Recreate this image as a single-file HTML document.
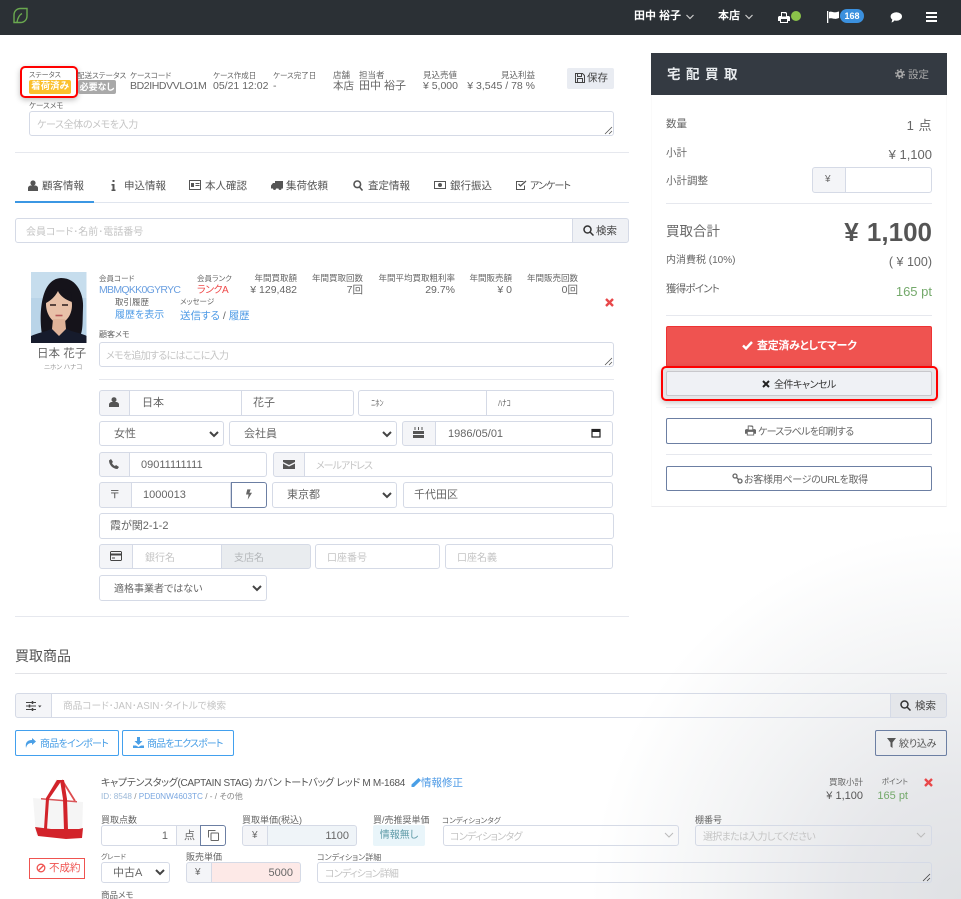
<!DOCTYPE html>
<html lang="ja"><head><meta charset="utf-8"><title>宅配買取</title>
<style>
html,body{margin:0;padding:0;background:#fff}
#p{position:relative;width:961px;height:899px;overflow:hidden;font-family:"Liberation Sans","Noto Sans CJK JP",sans-serif;font-feature-settings:"palt";color:#666;font-size:11px;line-height:14px;background:radial-gradient(circle 370px at 100% 100%,#dfe1e4 0,#e6e7ea 30%,#f3f4f5 65%,#fff 100%)}
#p div,#p svg{position:absolute;box-sizing:border-box}
.t{white-space:nowrap}
.l{font-size:8.5px;white-space:nowrap;color:#666}
.k{font-size:7.5px}
.v{font-size:10.5px;white-space:nowrap;color:#666}
.bl{color:#4f9be6}
.f{background:#fff;border:1px solid #d5dae6;border-radius:3px;height:26px;line-height:24px;padding-left:10px;white-space:nowrap;color:#666;font-size:11px;overflow:hidden}
.ph{color:#c4c4c4}
.pre{background:#f4f5f8;border:1px solid #d5dae6;border-radius:3px 0 0 3px;height:26px}
.hr{height:1px;background:#e6e8ee}
.ic{fill:#555}
.btn{border:1px solid #6c7fa3;border-radius:2px;background:#fff;color:#666;white-space:nowrap}
</style></head><body>
<div id="p">

<!-- top bar -->
<div style="left:0;top:0;width:961px;height:35px;background:#2b3035"></div>
<svg style="left:12px;top:7px" width="18" height="18" viewBox="0 0 18 18" fill="none" stroke="#6aa84f" stroke-width="1.4"><path d="M2 15.500V8C2 4 5 1.500 8.500 1.500H15V9c0 4-3 6.500-6.500 6.500zM5 15C6 10 8 7.500 10 6.500"/></svg>
<div class="t" style="left:634px;top:9px;color:#fff;font-weight:bold;font-size:11px">田中 裕子</div>
<svg style="left:686px;top:14px" width="8" height="6" viewBox="0 0 8 6" fill="none" stroke="#ccc" stroke-width="1.200"><path d="M.5 1l3.500 3.500L7.500 1"/></svg>
<div class="t" style="left:718px;top:9px;color:#fff;font-weight:bold;font-size:11px">本店</div>
<svg style="left:745px;top:14px" width="8" height="6" viewBox="0 0 8 6" fill="none" stroke="#ccc" stroke-width="1.200"><path d="M.5 1l3.500 3.500L7.500 1"/></svg>
<svg style="left:778px;top:11px" width="12" height="12" viewBox="0 0 12 12" fill="#fff"><path d="M3 1h5l1 1v3h2l1 1v4h-2v2H2v-2H0V6l1-1h2zM4 2v3.500h4V2.500zM3 8v3h6V8z" fill-rule="evenodd"/></svg>
<div style="left:791px;top:11px;width:10px;height:10px;border-radius:50%;background:#8bc34a"></div>
<svg style="left:827px;top:11px" width="12" height="12" viewBox="0 0 12 12" fill="#fff"><path d="M0 0h1.300v12H0zM2 1c2-1 3 0 5 .3 1.500.2 3-.3 5-.8V7c-2 .8-3.500 1-5 .8C5 7.500 4 7 2 7.500z"/></svg>
<div style="left:840px;top:9px;width:24px;height:14px;border-radius:7px;background:#3b90de;color:#fff;font-size:9px;font-weight:bold;text-align:center;line-height:14px">168</div>
<svg style="left:890px;top:11px" width="12" height="12" viewBox="0 0 12 12" fill="#fff"><ellipse cx="6.300" cy="5.500" rx="5.700" ry="4.300"/><path d="M1.500 11.500c1.500-.3 2.500-1.200 3-2.500L2.500 8z"/></svg>
<svg style="left:926px;top:12px" width="11" height="10" viewBox="0 0 11 10" fill="#fff"><path d="M0 0h11v2H0zM0 4h11v2H0zM0 8h11v2H0z"/></svg>

<!-- case header -->
<div style="left:20px;top:66px;width:58px;height:32px;border:2px solid #f00;border-radius:5px;box-shadow:0 2px 6px rgba(0,0,0,.25);background:#fff"></div>
<div class="l" style="left:29px;top:69px;font-size:7px">ステータス</div>
<div style="left:29px;top:80px;width:42px;height:14px;border-radius:2px;background:#fbc02d;color:#fff;font-weight:bold;font-size:9.500px;line-height:14px;text-align:center;white-space:nowrap">着荷済み</div>
<div class="l k" style="left:77px;top:69px">配送ステータス</div>
<div style="left:78px;top:80px;width:38px;height:14px;border-radius:2px;background:#a9a9a9;color:#fff;font-weight:bold;font-size:9px;line-height:14px;text-align:center;white-space:nowrap">必要なし</div>
<div class="l k" style="left:130px;top:69px">ケースコード</div>
<div class="v" style="left:130px;top:79px;letter-spacing:-.4px">BD2IHDVVLO1M</div>
<div class="l k" style="left:213px;top:69px">ケース作成日</div>
<div class="v" style="left:213px;top:79px">05/21 12:02</div>
<div class="l k" style="left:273px;top:69px">ケース完了日</div>
<div class="v" style="left:273px;top:79px">-</div>
<div class="l" style="left:333px;top:68px">店舗</div>
<div class="v" style="left:333px;top:79px">本店</div>
<div class="l" style="left:359px;top:68px">担当者</div>
<div class="v" style="left:359px;top:79px;font-size:11px">田中 裕子</div>
<div class="l" style="right:504px;top:68px">見込売値</div>
<div class="v" style="right:503px;top:79px">¥ 5,000</div>
<div class="l" style="right:426px;top:68px">見込利益</div>
<div class="v" style="right:426px;top:79px">¥ 3,545 / 78 %</div>
<div style="left:567px;top:68px;width:47px;height:21px;background:#e9ecf2;border-radius:2px;color:#444;font-size:10.500px;line-height:21px;padding-left:20px;white-space:nowrap">保存</div>
<svg style="left:575px;top:73px" width="10" height="10" viewBox="0 0 10 10" fill="none" stroke="#444"><path d="M.5.500h7l2 2v7H.500zM2.500.500v3h4v-3M2.500 9.500v-4h5v4"/></svg>
<div class="l k" style="left:29px;top:99px">ケースメモ</div>
<div class="f ph" style="left:29px;top:111px;width:585px;height:25px;line-height:27px;padding-left:7px;font-size:10px;letter-spacing:-.35px">ケース全体のメモを入力</div>
<svg style="left:604px;top:126px" width="9" height="9" stroke="#555" stroke-width=".8"><path d="M1 8L8 1M5 8L8 5"/></svg>
<div class="hr" style="left:15px;top:152px;width:614px"></div>

<!-- tabs -->
<div class="hr" style="left:15px;top:202px;width:614px;background:#e0e5ee"></div>
<div style="left:15px;top:201px;width:79px;height:2px;background:#3b97e3"></div>
<svg style="left:28px;top:180px" width="10" height="11" viewBox="0 0 10 11" class="ic"><circle cx="5" cy="3" r="2.600"/><path d="M0 11V8c0-1.500 1.500-2.500 3-2.500h4C8.500 5.500 10 6.500 10 8v3z"/></svg>
<div class="t" style="left:42px;top:179px;font-size:10.500px;color:#555">顧客情報</div>
<svg style="left:111px;top:180px" width="5" height="11" viewBox="0 0 5 11" class="ic"><path d="M1.500 0h2v2h-2zM.5 4h3v5.500h1V11H.500V9.500h1V5.500h-1z"/></svg>
<div class="t" style="left:124px;top:179px;font-size:10.500px;color:#555">申込情報</div>
<svg style="left:189px;top:180px" width="12" height="10" viewBox="0 0 12 10" fill="none" stroke="#555"><rect x=".5" y=".5" width="11" height="9"/><rect x="2" y="3" width="3" height="4" fill="#555" stroke="none"/><path d="M6.500 3.500h4M6.500 5.500h4"/></svg>
<div class="t" style="left:205px;top:179px;font-size:10.500px;color:#555">本人確認</div>
<svg style="left:271px;top:180px" width="12" height="11" viewBox="0 0 12 11" class="ic"><path d="M4 1h8v7.500h-1.500a1.500 1.500 0 0 1-3 0H5a1.500 1.500 0 0 1-3 0H0V5.500L2 3h2z"/></svg>
<div class="t" style="left:286px;top:179px;font-size:10.500px;color:#555">集荷依頼</div>
<svg style="left:353px;top:180px" width="10" height="11" viewBox="0 0 10 11" fill="none" stroke="#555" stroke-width="1.600"><circle cx="4.300" cy="4.300" r="3.300"/><path d="M6.500 7l3 3.500"/></svg>
<div class="t" style="left:368px;top:179px;font-size:10.500px;color:#555">査定情報</div>
<svg style="left:434px;top:180px" width="12" height="10" viewBox="0 0 12 10" fill="none" stroke="#555"><rect x=".5" y="1.500" width="11" height="7"/><circle cx="6" cy="5" r="1.500" fill="#555"/></svg>
<div class="t" style="left:450px;top:179px;font-size:10.500px;color:#555">銀行振込</div>
<svg style="left:516px;top:180px" width="11" height="10" viewBox="0 0 11 10" fill="none" stroke="#555"><path d="M8.500 5.500v4h-8v-8h7"/><path d="M2.500 4l2 2L10 1" stroke-width="1.300"/></svg>
<div class="t" style="left:530px;top:180px;font-size:10px;letter-spacing:-.9px;color:#555">アンケート</div>

<!-- member search -->
<div class="f ph" style="left:15px;top:218px;width:558px;height:25px;line-height:27px;border-radius:3px 0 0 3px;font-size:10px">会員コード･名前･電話番号</div>
<div style="left:572px;top:218px;width:57px;height:25px;background:#eff1f5;border:1px solid #d5dae6;border-radius:0 3px 3px 0;color:#444;line-height:24px;padding-left:23px;font-size:10.500px;white-space:nowrap">検索</div>
<svg style="left:583px;top:225px" width="11" height="11" viewBox="0 0 11 11" fill="none" stroke="#333" stroke-width="1.500"><circle cx="4.500" cy="4.500" r="3.500"/><path d="M7 7l3.500 3.500"/></svg>

<!-- customer -->
<svg style="left:31px;top:272px" width="56" height="71" viewBox="0 0 56 71">
<rect width="56" height="71" fill="#b9d4e8"/><rect width="56" height="26" fill="#c6dded"/>
<path d="M11 62C8 44 9 7 30 6c17 0 23 18 22 30-.5 12 0 20-2 26z" fill="#15131a"/>
<path d="M0 71V64c6-3 14-4 20-7h16c5 3 14 4 20 7v7z" fill="#161b2c"/>
<path d="M15 32c0-9 6-13 13-13s13 5 13 14c0 10-6 18-13 18s-13-9-13-19z" fill="#e8c1a8"/>
<path d="M22 47h12l1 10-7 7-7-7z" fill="#dfb399"/>
<path d="M15 31c4-2 9-6 12-12l-6-1-6 6zM27 19c2 5 8 9 14 11l-1-9-7-4z" fill="#15131a"/>
<path d="M19 33h6M31 33h6" stroke="#2a1e1c" stroke-width="1.400"/><path d="M24.500 43.500h7" stroke="#b6595a" stroke-width="1.600"/>
<rect x="55" width="1" height="71" fill="#fff" opacity=".5"/>
</svg>
<div class="t" style="left:37px;top:347px;font-size:11.500px;color:#666">日本 花子</div>
<div class="t" style="left:44px;top:361px;font-size:6.500px;color:#999">ニホン ハナコ</div>

<div class="l k" style="left:99px;top:272px">会員コード</div>
<div class="t" style="left:99px;top:283px;font-size:10.500px;letter-spacing:-.7px;color:#6a9fe0">MBMQKK0GYRYC</div>
<div class="l k" style="left:197px;top:272px">会員ランク</div>
<div class="t" style="left:197px;top:284px;font-size:10px;letter-spacing:-.5px;color:#ef4a4a">ランクA</div>
<div class="l" style="right:664px;top:271px">年間買取額</div>
<div class="v" style="right:664px;top:283px">¥ 129,482</div>
<div class="l" style="right:598px;top:271px">年間買取回数</div>
<div class="v" style="right:598px;top:283px">7回</div>
<div class="l" style="right:506px;top:271px">年間平均買取粗利率</div>
<div class="v" style="right:506px;top:283px">29.7%</div>
<div class="l" style="right:449px;top:271px">年間販売額</div>
<div class="v" style="right:449px;top:283px">¥ 0</div>
<div class="l" style="right:383px;top:271px">年間販売回数</div>
<div class="v" style="right:383px;top:283px">0回</div>
<div class="l" style="left:115px;top:295px">取引履歴</div>
<div class="t bl" style="left:115px;top:309px;font-size:10px">履歴を表示</div>
<div class="l" style="left:180px;top:295px;font-size:7.500px">メッセージ</div>
<div class="t" style="left:180px;top:309px;font-size:10.500px;color:#666"><span class="bl">送信する</span> / <span class="bl">履歴</span></div>
<svg style="left:605px;top:298px" width="9" height="9" viewBox="0 0 9 9" stroke="#e8484a" stroke-width="2.400"><path d="M1 1l7 7M8 1L1 8"/></svg>
<div class="l k" style="left:99px;top:328px;font-size:8px">顧客メモ</div>
<div class="f ph" style="left:99px;top:342px;width:515px;height:25px;line-height:27px;padding-left:6px;font-size:10px;letter-spacing:-.7px">メモを追加するにはここに入力</div>
<svg style="left:604px;top:357px" width="9" height="9" stroke="#555" stroke-width=".8"><path d="M1 8L8 1M5 8L8 5"/></svg>
<div class="hr" style="left:99px;top:379px;width:515px"></div>

<!-- form rows -->
<div class="pre" style="left:99px;top:390px;width:31px"></div>
<svg style="left:109px;top:397px" width="10" height="10" viewBox="0 0 10 10" class="ic"><circle cx="5" cy="2.700" r="2.500"/><path d="M0 10V7.500C0 6 1.500 5 3 5h4c1.500 0 3 1 3 2.500V10z"/></svg>
<div class="f" style="left:129px;top:390px;width:113px;border-radius:0;padding-left:12px">日本</div>
<div class="f" style="left:241px;top:390px;width:113px;border-radius:0 3px 3px 0;padding-left:11px">花子</div>
<div class="f" style="left:358px;top:390px;width:129px;border-radius:3px 0 0 3px;padding-left:12px;font-size:8.500px">ﾆﾎﾝ</div>
<div class="f" style="left:486px;top:390px;width:128px;border-radius:0 3px 3px 0;padding-left:11px;font-size:8.500px">ﾊﾅｺ</div>

<div class="f" style="left:99px;top:421px;width:125px;height:25px;line-height:25px;padding-left:14px">女性</div>
<svg style="left:209px;top:431px" width="10" height="7" viewBox="0 0 10 7" fill="none" stroke="#444" stroke-width="2"><path d="M1 1l4 4 4-4"/></svg>
<div class="f" style="left:229px;top:421px;width:168px;height:25px;line-height:25px;padding-left:14px">会社員</div>
<svg style="left:382px;top:431px" width="10" height="7" viewBox="0 0 10 7" fill="none" stroke="#444" stroke-width="2"><path d="M1 1l4 4 4-4"/></svg>
<div class="pre" style="left:402px;top:421px;width:34px;height:25px"></div>
<svg style="left:413px;top:427px" width="11" height="11" viewBox="0 0 11 11" class="ic"><path d="M1.500 0h1v3h-1zM5 0h1v3H5zM8.500 0h1v3h-1zM0 4h11v3H0zM0 8h11v3H0z"/></svg>
<div class="f" style="left:435px;top:421px;width:178px;height:25px;line-height:25px;border-radius:0 3px 3px 0;padding-left:12px">1986/05/01</div>
<svg style="left:591px;top:428px" width="10" height="10" viewBox="0 0 10 10" fill="none" stroke="#222" stroke-width="1.200"><rect x="1" y="1.500" width="8" height="7.500"/><path d="M1 3h8" stroke-width="2"/></svg>

<div class="pre" style="left:99px;top:452px;width:31px;height:25px"></div>
<svg style="left:109px;top:459px" width="10" height="10" viewBox="0 0 10 10" class="ic"><path d="M0 1.500L2 0l2 3-1 1c.5 1.300 1.700 2.500 3 3l1-1 3 2-1.500 2C4 10 0 6 0 1.500z"/></svg>
<div class="f" style="left:129px;top:452px;width:138px;height:25px;line-height:25px;border-radius:0 3px 3px 0;padding-left:11px">09011111111</div>
<div class="pre" style="left:273px;top:452px;width:32px;height:25px"></div>
<svg style="left:283px;top:460px" width="12" height="9" viewBox="0 0 12 9" class="ic"><path d="M0 0h12v2L6 5 0 2zM0 3.500L6 6.500l6-3V9H0z"/></svg>
<div class="f ph" style="left:304px;top:452px;width:309px;height:25px;line-height:27px;border-radius:0 3px 3px 0;padding-left:11px;font-size:10px;letter-spacing:-1px">メールアドレス</div>

<div class="pre" style="left:99px;top:482px;width:33px"></div>
<div class="t" style="left:110px;top:488px;font-size:11px;color:#555">〒</div>
<div class="f" style="left:131px;top:482px;width:100px;border-radius:0;padding-left:11px">1000013</div>
<div style="left:231px;top:482px;width:36px;height:26px;background:#fff;border:1px solid #6c7fa3;border-radius:0 3px 3px 0"></div>
<svg style="left:246px;top:489px" width="6" height="11" viewBox="0 0 7 12" fill="#666"><path d="M1.500 0h4L4 4h3L2 12l1-6H0z"/></svg>
<div class="f" style="left:272px;top:482px;width:125px;padding-left:14px">東京都</div>
<svg style="left:382px;top:492px" width="10" height="7" viewBox="0 0 10 7" fill="none" stroke="#444" stroke-width="2"><path d="M1 1l4 4 4-4"/></svg>
<div class="f" style="left:403px;top:482px;width:210px;padding-left:10px">千代田区</div>

<div class="f" style="left:99px;top:513px;width:515px;padding-left:10px">霞が関2-1-2</div>

<div class="pre" style="left:99px;top:544px;width:34px;height:25px"></div>
<svg style="left:110px;top:551px" width="12" height="10" viewBox="0 0 12 10" fill="#444"><path d="M1 0h10l1 1v8l-1 1H1L0 9V1zM1 1v1.500h10V1zM1 4.500V9h10V4.500zM2 6.500h3v1H2z" fill-rule="evenodd"/></svg>
<div class="f ph" style="left:132px;top:544px;width:90px;height:25px;line-height:27px;border-radius:0;padding-left:12px;font-size:10px">銀行名</div>
<div class="f" style="left:221px;top:544px;width:90px;height:25px;line-height:27px;border-radius:0 3px 3px 0;padding-left:12px;background:#e9ecef;color:#b4b7ba;font-size:10px">支店名</div>
<div class="f ph" style="left:315px;top:544px;width:125px;height:25px;line-height:27px;padding-left:11px;font-size:10px">口座番号</div>
<div class="f ph" style="left:445px;top:544px;width:168px;height:25px;line-height:27px;padding-left:11px;font-size:10px">口座名義</div>

<div class="f" style="left:99px;top:575px;width:168px;padding-left:14px;font-size:10px;line-height:27px">適格事業者ではない</div>
<svg style="left:252px;top:585px" width="10" height="7" viewBox="0 0 10 7" fill="none" stroke="#444" stroke-width="2"><path d="M1 1l4 4 4-4"/></svg>
<div class="hr" style="left:15px;top:616px;width:614px"></div>

<!-- right panel -->
<div style="left:651px;top:95px;width:296px;height:412px;background:#fff;border-left:1px solid #fafafa;border-right:1px solid #fafafa;border-bottom:1px solid #ececef"></div>
<div style="left:651px;top:53px;width:296px;height:42px;background:#343a42"></div>
<div class="t" style="left:667px;top:67px;color:#e9ecef;font-weight:bold;font-size:13.500px;line-height:16px;letter-spacing:5.500px">宅配買取</div>
<svg style="left:895px;top:69px" width="10" height="10" viewBox="0 0 10 10" fill="none" stroke="#aaa"><circle cx="5" cy="5" r="2.400" stroke-width="1.800"/><circle cx="5" cy="5" r="4.200" stroke-width="1.500" stroke-dasharray="1.650 1.650"/></svg>
<div class="t" style="left:908px;top:68px;font-size:10.500px;color:#aaa">設定</div>
<div class="t" style="left:666px;top:117px;font-size:10.500px">数量</div>
<div class="t" style="right:29px;top:119px;font-size:13px;letter-spacing:.5px">1 点</div>
<div class="t" style="left:666px;top:146px;font-size:10.500px">小計</div>
<div class="t" style="right:29px;top:148px;font-size:13px">¥ 1,100</div>
<div class="t" style="left:666px;top:174px;font-size:10.500px">小計調整</div>
<div class="pre" style="left:812px;top:167px;width:34px"></div>
<div class="t" style="left:825px;top:173px;font-size:10px">¥</div>
<div class="f" style="left:845px;top:167px;width:87px;border-radius:0 3px 3px 0"></div>
<div class="hr" style="left:666px;top:203px;width:266px"></div>
<div class="t" style="left:666px;top:224px;font-size:13.500px;line-height:16px;color:#666">買取合計</div>
<div class="t" style="right:29px;top:216px;font-size:26px;line-height:32px;font-weight:bold;color:#555;word-spacing:1px">¥ 1,100</div>
<div class="t" style="left:666px;top:254px;font-size:10px">内消費税 (10%)</div>
<div class="t" style="right:29px;top:255px;font-size:12.500px">( ¥ 100)</div>
<div class="t" style="left:666px;top:282px;font-size:10.500px;letter-spacing:-.8px">獲得ポイント</div>
<div class="t" style="right:29px;top:285px;font-size:13px;color:#74a96b">165 pt</div>
<div class="hr" style="left:666px;top:315px;width:266px"></div>
<div style="left:666px;top:326px;width:266px;height:41px;background:#ef5350;border:1px solid #e33;border-radius:2px;color:#fff;font-weight:bold;font-size:11px;letter-spacing:-.3px;line-height:38px;padding-left:90px;white-space:nowrap">査定済みとしてマーク</div>
<svg style="left:742px;top:341px" width="11" height="9" viewBox="0 0 11 9" fill="none" stroke="#fff" stroke-width="2.400"><path d="M1 4.500L4 7.500 10 1"/></svg>
<div style="left:661px;top:366px;width:277px;height:35px;border:2px solid #f00;border-radius:5px;background:#e4e5e7;box-shadow:0 2px 6px rgba(0,0,0,.22)"></div>
<div style="left:666px;top:371px;width:266px;height:25px;background:#eff1f5;border:1px solid #c8c8cc;border-radius:2px;color:#333;font-size:10px;letter-spacing:-.5px;line-height:27px;padding-left:107px;white-space:nowrap">全件キャンセル</div>
<svg style="left:762px;top:380px" width="8" height="8" viewBox="0 0 8 8" stroke="#222" stroke-width="2"><path d="M1 1l6 6M7 1L1 7"/></svg>
<div class="hr" style="left:666px;top:407px;width:266px"></div>
<div class="btn" style="left:666px;top:418px;width:266px;height:26px;line-height:27px;font-size:10px;letter-spacing:-.7px;padding-left:91px">ケースラベルを印刷する</div>
<svg style="left:745px;top:425px" width="11" height="11" viewBox="0 0 12 11" fill="#666"><path d="M3 0h5l1 1v3h2l1 1v4h-2v2H2V9H0V5l1-1h2zM4 1v3.500h4V1.500zM3 7v3h6V7z" fill-rule="evenodd"/></svg>
<div class="hr" style="left:666px;top:454px;width:266px"></div>
<div class="btn" style="left:666px;top:466px;width:266px;height:25px;line-height:27px;font-size:10px;letter-spacing:-.3px;padding-left:77px">お客様用ページのURLを取得</div>
<svg style="left:732px;top:473px" width="11" height="11" viewBox="0 0 11 11" fill="none" stroke="#666" stroke-width="1.300"><circle cx="3" cy="3" r="2"/><circle cx="8" cy="8" r="2"/><path d="M4.500 4.500l2 2"/></svg>

<!-- items -->
<div class="t" style="left:15px;top:648px;font-size:14px;line-height:16px;color:#555">買取商品</div>
<div class="hr" style="left:15px;top:673px;width:932px;background:#e2e3e7"></div>
<div class="pre" style="left:15px;top:693px;width:37px;height:25px"></div>
<svg style="left:26px;top:701px" width="16" height="10" viewBox="0 0 16 10" fill="none" stroke="#444"><path d="M0 1.500h10M0 5h10M0 8.500h10"/><path d="M6.500 0v3M3.500 3.500v3M6.500 7v3" stroke-width="1.500"/><path d="M12 4.500h3.500L13.750 6.500z" fill="#444" stroke="none"/></svg>
<div class="f ph" style="left:51px;top:693px;width:840px;height:25px;line-height:25px;border-radius:0;padding-left:11px;font-size:9.700px;background:transparent">商品コード･JAN･ASIN･タイトルで検索</div>
<div style="left:890px;top:693px;width:57px;height:25px;background:#e4e6ea;border:1px solid #d5dae6;border-radius:0 3px 3px 0;color:#444;line-height:24px;padding-left:24px;font-size:10.500px;white-space:nowrap">検索</div>
<svg style="left:900px;top:700px" width="11" height="11" viewBox="0 0 11 11" fill="none" stroke="#333" stroke-width="1.500"><circle cx="4.500" cy="4.500" r="3.500"/><path d="M7 7l3.500 3.500"/></svg>
<div class="btn" style="left:15px;top:730px;width:104px;height:26px;border-color:#42a0ee;color:#4a9fe6;line-height:27px;font-size:10px;letter-spacing:-.75px;padding-left:24px">商品をインポート</div>
<svg style="left:25px;top:738px" width="11" height="10" viewBox="0 0 11 10" fill="#4a9fe6"><path d="M7 0l4 3.500L7 7V5C4 5 2 6 1 10 0 5 2 2 7 2z"/></svg>
<div class="btn" style="left:122px;top:730px;width:112px;height:26px;border-color:#42a0ee;color:#4a9fe6;line-height:27px;font-size:10px;letter-spacing:-.9px;padding-left:24px">商品をエクスポート</div>
<svg style="left:133px;top:737px" width="11" height="11" viewBox="0 0 11 11" fill="#4a9fe6"><path d="M4 0h3v4h2.500L5.500 8 1.500 4H4zM0 8.500h3l2.500 1.500L8 8.500h3V11H0z"/></svg>
<div class="btn" style="left:875px;top:730px;width:72px;height:26px;line-height:27px;font-size:10px;letter-spacing:-.2px;padding-left:23px;color:#555;background:transparent">絞り込み</div>
<svg style="left:887px;top:738px" width="9" height="10" viewBox="0 0 9 10" fill="#555"><path d="M0 0h9L5.500 4.500V10L3.500 8.500v-4z"/></svg>

<!-- product -->
<svg style="left:33px;top:778px" width="52" height="62" viewBox="0 0 52 62">
<path d="M0 20l50 4-1 36-46-3z" fill="#f5f5f5"/>
<path d="M24 2L14 21" stroke="#e9dcd6" stroke-width="1.400" fill="none"/>
<path d="M29 2L42 23" stroke="#dd4c4f" stroke-width="1.800" fill="none"/>
<path d="M8 20l36 3v1.500L8 21.500z" fill="#d9565a"/>
<path d="M2 49l16 2L46 51l4-1-1 10-16 1-28-3z" fill="#d2232a"/>
<path d="M24 2h5l-13 19-2 30h-3l2-31z" fill="#d2232a"/>
<path d="M27 2h4l3 19 1 31h-4l-1-31z" fill="#d2232a"/>
</svg>
<div style="left:29px;top:858px;width:56px;height:21px;border:1px solid #ef5350;color:#ef5350;font-size:10.500px;line-height:19px;padding-left:19px;white-space:nowrap">不成約</div>
<svg style="left:36px;top:863px" width="10" height="10" viewBox="0 0 10 10" fill="none" stroke="#ef5350" stroke-width="1.300"><circle cx="5" cy="5" r="3.800"/><path d="M2.500 7.500l5-5"/></svg>

<div class="t" style="left:101px;top:777px;font-size:10px;letter-spacing:-.3px;color:#555">キャプテンスタッグ(CAPTAIN STAG) カバン トートバッグ レッド M M-1684</div>
<svg style="left:411px;top:778px" width="10" height="9" viewBox="0 0 10 9" fill="#4a9fe6"><path d="M7.500 0L10 2.200 3 9H.5V6.500z"/></svg>
<div class="t bl" style="left:421px;top:776px;font-size:10.500px">情報修正</div>
<div class="t" style="left:101px;top:790px;font-size:8.200px;color:#888"><span style="color:#9bb8d8">ID: 8548</span> / <span style="color:#7aa7e0">PDE0NW4603TC</span> / - / その他</div>

<div class="l" style="left:101px;top:813px;font-size:9px">買取点数</div>
<div class="f" style="left:101px;top:825px;width:76px;height:21px;line-height:20px;text-align:right;padding:0 8px 0 0;border-radius:3px 0 0 3px">1</div>
<div class="f" style="left:176px;top:825px;width:25px;height:21px;line-height:20px;padding-left:7px;background:#f7f8fa;border-radius:0">点</div>
<div style="left:200px;top:825px;width:26px;height:21px;background:#fff;border:1px solid #6c7fa3;border-radius:0 3px 3px 0"></div>
<svg style="left:208px;top:830px" width="11" height="11" viewBox="0 0 11 11" fill="none" stroke="#666"><path d="M.5 7.500V.5h7"/><rect x="3" y="3" width="7.500" height="7.500" rx=".5"/></svg>

<div class="l" style="left:242px;top:813px;font-size:9px">買取単価(税込)</div>
<div class="pre" style="left:242px;top:825px;width:26px;height:21px"></div>
<div class="t" style="left:252px;top:829px;font-size:10px">¥</div>
<div class="f" style="left:267px;top:825px;width:90px;height:21px;line-height:20px;text-align:right;padding:0 7px 0 0;background:#eff4f8;border-radius:0 3px 3px 0">1100</div>
<div class="l" style="left:373px;top:813px;font-size:9px">買/売推奨単価</div>
<div style="left:373px;top:825px;width:52px;height:21px;background:#e9f5fa;border-radius:2px;color:#5f9ba8;font-size:10px;line-height:22px;text-align:center;white-space:nowrap">情報無し</div>
<div class="l" style="left:442px;top:814px;font-size:7.500px">コンディションタグ</div>
<div class="f ph" style="left:443px;top:825px;width:236px;height:21px;line-height:23px;padding-left:6px;background:transparent;font-size:10px;letter-spacing:-.7px">コンディションタグ</div>
<svg style="left:664px;top:832px" width="10" height="6" viewBox="0 0 10 6" fill="none" stroke="#bbb"><path d="M1 1l4 4 4-4"/></svg>
<div class="l" style="left:695px;top:813px;font-size:9px">棚番号</div>
<div class="f ph" style="left:695px;top:825px;width:237px;height:21px;line-height:23px;padding-left:7px;background:transparent;font-size:10px;letter-spacing:-.7px">選択または入力してください</div>
<svg style="left:916px;top:832px" width="10" height="6" viewBox="0 0 10 6" fill="none" stroke="#bbb"><path d="M1 1l4 4 4-4"/></svg>

<div class="l" style="left:101px;top:851px;font-size:7px">グレード</div>
<div class="f" style="left:101px;top:862px;width:69px;height:21px;line-height:20px;padding-left:11px">中古A</div>
<svg style="left:155px;top:869px" width="10" height="7" viewBox="0 0 10 7" fill="none" stroke="#444" stroke-width="2"><path d="M1 1l4 4 4-4"/></svg>
<div class="l" style="left:186px;top:850px;font-size:9px">販売単価</div>
<div class="pre" style="left:186px;top:862px;width:26px;height:21px"></div>
<div class="t" style="left:195px;top:866px;font-size:10px">¥</div>
<div class="f" style="left:211px;top:862px;width:90px;height:21px;line-height:20px;text-align:right;padding:0 7px 0 0;background:#fde9e7;border-radius:0 3px 3px 0">5000</div>
<div class="l" style="left:317px;top:851px;font-size:8px">コンディション詳細</div>
<div class="f ph" style="left:317px;top:862px;width:615px;height:21px;line-height:23px;padding-left:7px;background:transparent;font-size:10px;letter-spacing:-.8px">コンディション詳細</div>
<svg style="left:922px;top:873px" width="9" height="9" stroke="#444" stroke-width=".8"><path d="M1 8L8 1M5 8L8 5"/></svg>
<div class="l" style="left:101px;top:888px;font-size:8.500px">商品メモ</div>

<div class="l" style="right:98px;top:775px;font-size:8.500px">買取小計</div>
<div class="t" style="right:98px;top:789px;font-size:11px;color:#555">¥ 1,100</div>
<div class="l" style="right:53px;top:775px;font-size:7.500px">ポイント</div>
<div class="t" style="right:53px;top:789px;font-size:11px;color:#74a96b">165 pt</div>
<svg style="left:924px;top:778px" width="9" height="9" viewBox="0 0 9 9" stroke="#e8484a" stroke-width="2.400"><path d="M1 1l7 7M8 1L1 8"/></svg>
</div>
</body></html>
